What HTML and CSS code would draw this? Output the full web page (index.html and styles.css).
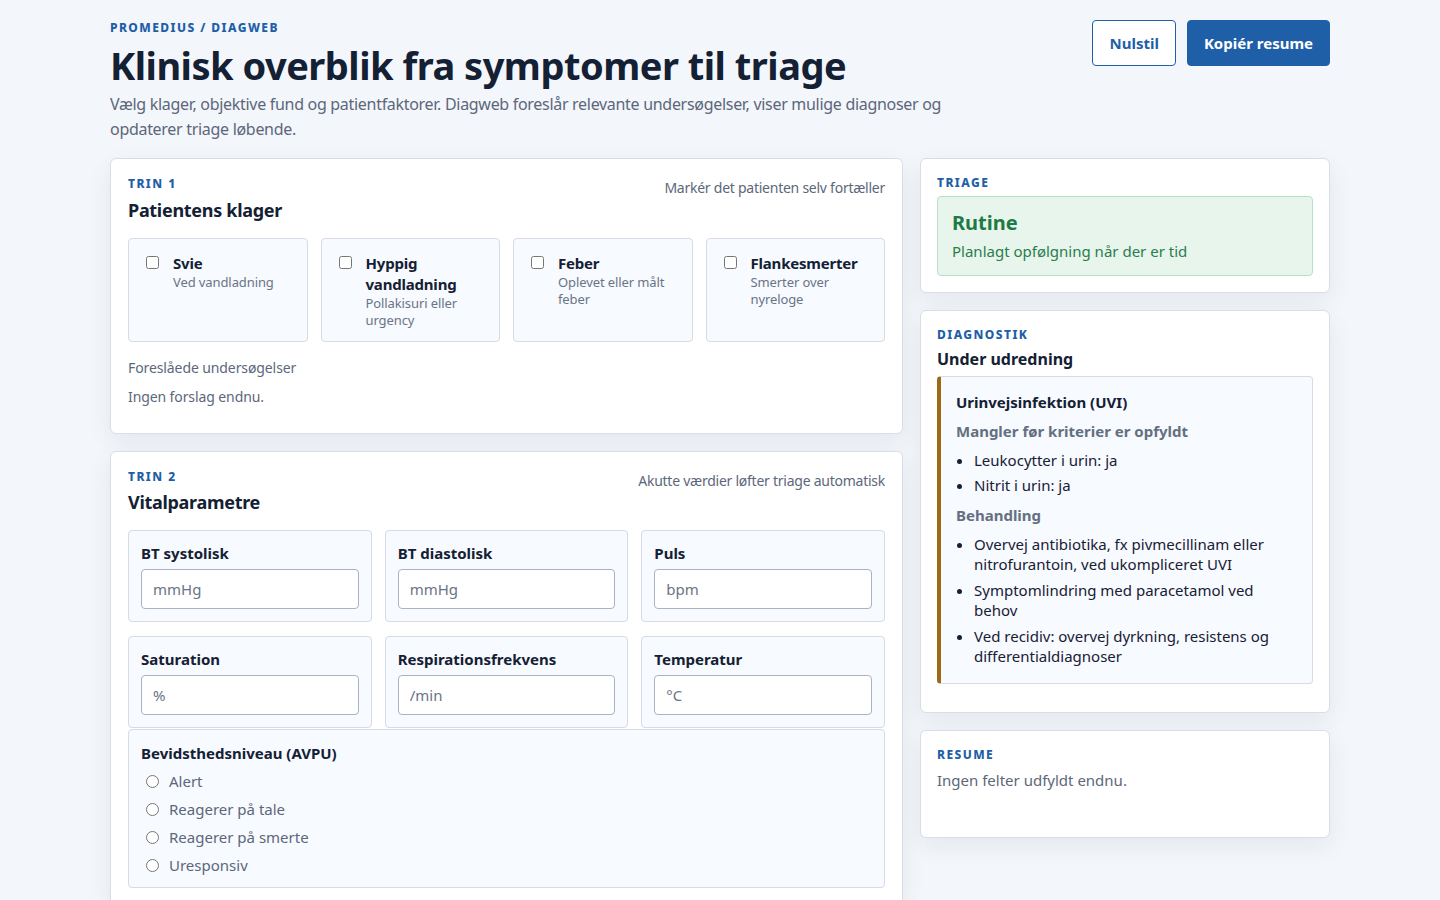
FILE: index.html
```html
<!DOCTYPE html>
<html lang="da">
<head>
<meta charset="utf-8">
<title>Diagweb</title>
<link rel="stylesheet" href="styles.css">
</head>
<body>
<div class="page">
  <header class="top">
    <div class="intro">
      <div class="eyebrow">Promedius / Diagweb</div>
      <h1>Klinisk overblik fra symptomer til triage</h1>
      <p class="lead">Vælg klager, objektive fund og patientfaktorer. Diagweb foreslår relevante undersøgelser, viser mulige diagnoser og opdaterer triage løbende.</p>
    </div>
    <div class="actions">
      <button class="btn btn-outline">Nulstil</button>
      <button class="btn btn-primary">Kopiér resume</button>
    </div>
  </header>

  <main class="layout">
    <div class="col-main">
      <section class="card card-main">
        <div class="card-head">
          <div>
            <div class="eyebrow">Trin 1</div>
            <h2>Patientens klager</h2>
          </div>
          <div class="hint">Markér det patienten selv fortæller</div>
        </div>
        <div class="complaints">
          <label class="complaint"><input type="checkbox"><span class="ctext"><span class="ctitle">Svie</span><span class="cdesc">Ved vandladning</span></span></label>
          <label class="complaint"><input type="checkbox"><span class="ctext"><span class="ctitle">Hyppig vandladning</span><span class="cdesc">Pollakisuri eller urgency</span></span></label>
          <label class="complaint"><input type="checkbox"><span class="ctext"><span class="ctitle">Feber</span><span class="cdesc">Oplevet eller målt feber</span></span></label>
          <label class="complaint"><input type="checkbox"><span class="ctext"><span class="ctitle">Flankesmerter</span><span class="cdesc">Smerter over nyreloge</span></span></label>
        </div>
        <div class="suggest">
          <div class="muted">Foreslåede undersøgelser</div>
          <div class="muted">Ingen forslag endnu.</div>
        </div>
      </section>

      <section class="card card-main">
        <div class="card-head">
          <div>
            <div class="eyebrow">Trin 2</div>
            <h2 class="h2-tight">Vitalparametre</h2>
          </div>
          <div class="hint">Akutte værdier løfter triage automatisk</div>
        </div>
        <div class="vitals">
          <label class="vital"><span class="vlabel">BT systolisk</span><input type="text" placeholder="mmHg"></label>
          <label class="vital"><span class="vlabel">BT diastolisk</span><input type="text" placeholder="mmHg"></label>
          <label class="vital"><span class="vlabel">Puls</span><input type="text" placeholder="bpm"></label>
          <label class="vital"><span class="vlabel">Saturation</span><input type="text" placeholder="%"></label>
          <label class="vital"><span class="vlabel">Respirationsfrekvens</span><input type="text" placeholder="/min"></label>
          <label class="vital"><span class="vlabel">Temperatur</span><input type="text" placeholder="°C"></label>
        </div>
        <div class="avpu">
          <div class="vlabel">Bevidsthedsniveau (AVPU)</div>
          <label class="radio"><input type="radio" name="avpu"> Alert</label>
          <label class="radio"><input type="radio" name="avpu"> Reagerer på tale</label>
          <label class="radio"><input type="radio" name="avpu"> Reagerer på smerte</label>
          <label class="radio"><input type="radio" name="avpu"> Uresponsiv</label>
        </div>
      </section>
    </div>

    <aside class="col-side">
      <section class="card">
        <div class="eyebrow">Triage</div>
        <div class="triage">
          <div class="triage-title">Rutine</div>
          <div class="triage-text">Planlagt opfølgning når der er tid</div>
        </div>
      </section>

      <section class="card">
        <div class="eyebrow">Diagnostik</div>
        <h3>Under udredning</h3>
        <div class="diag">
          <div class="diag-title">Urinvejsinfektion (UVI)</div>
          <div class="diag-sub">Mangler før kriterier er opfyldt</div>
          <ul class="list-tight">
            <li>Leukocytter i urin: ja</li>
            <li>Nitrit i urin: ja</li>
          </ul>
          <div class="diag-sub">Behandling</div>
          <ul>
            <li>Overvej antibiotika, fx pivmecillinam eller nitrofurantoin, ved ukompliceret UVI</li>
            <li>Symptomlindring med paracetamol ved behov</li>
            <li>Ved recidiv: overvej dyrkning, resistens og differentialdiagnoser</li>
          </ul>
        </div>
      </section>

      <section class="card resume">
        <div class="eyebrow">Resume</div>
        <div class="resume-text">Ingen felter udfyldt endnu.</div>
      </section>
    </aside>
  </main>
</div>
</body>
</html>
```

FILE: styles.css
```css
* { box-sizing: border-box; }
html, body { margin: 0; padding: 0; }
body {
  background: #f3f6fa;
  font-family: "Noto Sans", "Open Sans", sans-serif;
  color: #172033;
  font-size: 16px;
}
.page {
  width: 1220px;
  margin: 0 auto;
  padding-top: 20px;
}
.top {
  display: flex;
  justify-content: space-between;
  align-items: flex-start;
}
.intro { max-width: 850px; }
.eyebrow {
  color: #1f5fa8;
  font-weight: 800;
  text-transform: uppercase;
  letter-spacing: 0.12em;
  font-size: 12px;
  line-height: 16px;
}
h1 {
  margin: 4px 0 0;
  font-size: 38px;
  line-height: 50px;
  font-weight: 700;
  letter-spacing: -0.5px;
  color: #142033;
}
.lead {
  margin: 2px 0 0;
  color: #5c677a;
  font-size: 16px;
  line-height: 25px;
  letter-spacing: -0.3px;
}
.actions { display: flex; gap: 11px; }
.btn {
  font-family: inherit;
  font-size: 15px;
  font-weight: 700;
  height: 46px;
  padding: 0 16px;
  border-radius: 4px;
  cursor: pointer;
}
.btn-outline { background: #fff; color: #1f5fa8; border: 1px solid #1f5fa8; }
.btn-primary { background: #1f5fa8; color: #fff; border: 1px solid #1f5fa8; }

.layout {
  display: grid;
  grid-template-columns: minmax(0, 1fr) 410px;
  gap: 17px;
  margin-top: 16px;
  align-items: start;
}
.col-main, .col-side { display: flex; flex-direction: column; gap: 17px; min-width: 0; }
.card {
  background: #fff;
  border: 1px solid #d8dee8;
  border-radius: 6px;
  padding: 16px;
  box-shadow: 0 8px 24px rgba(30, 45, 70, 0.07);
}
.card-main { padding: 17px; }
.card-head { display: flex; justify-content: space-between; align-items: flex-start; }
.hint { color: #5c677a; font-size: 14px; line-height: 20px; margin-top: 2px; letter-spacing: -0.25px; }
h2 { margin: 6px 0 0; font-size: 18px; line-height: 24px; font-weight: 700; letter-spacing: -0.3px; color: #142033; }
.h2-tight { margin-top: 5px; }
h3 { margin: 5px 0 0; font-size: 16px; line-height: 22px; font-weight: 700; color: #142033; }

.complaints {
  display: grid;
  grid-template-columns: repeat(4, minmax(0, 1fr));
  gap: 13px;
  margin-top: 16px;
}
.complaint {
  display: flex;
  gap: 14px;
  background: #f7faff;
  border: 1px solid #d5dce6;
  border-radius: 4px;
  padding: 14px 12px 12px 17px;
}
.complaint input { margin: 3px 0 0; width: 13px; height: 13px; flex: none; }
.ctext { display: flex; flex-direction: column; min-width: 0; }
.ctitle { font-weight: 700; font-size: 15px; line-height: 21px; color: #142033; letter-spacing: -0.2px; }
.cdesc { color: #6a7485; font-size: 13px; line-height: 17px; letter-spacing: -0.1px; }

.suggest { margin-top: 16px; display: flex; flex-direction: column; gap: 9px; padding-bottom: 9px; }
.muted { color: #5c677a; font-size: 14px; line-height: 20px; letter-spacing: -0.1px; }

.vitals {
  display: grid;
  grid-template-columns: repeat(3, minmax(0, 1fr));
  column-gap: 13px;
  row-gap: 14px;
  margin-top: 16px;
}
.vital {
  display: flex;
  flex-direction: column;
  gap: 5px;
  background: #f7faff;
  border: 1px solid #d5dce6;
  border-radius: 4px;
  padding: 11px 12px 12px;
  min-width: 0;
}
.vlabel { font-weight: 700; font-size: 15px; line-height: 22px; color: #142033; }
.vital input {
  font-family: inherit;
  font-size: 15px;
  width: 100%;
  min-width: 0;
  height: 40px;
  border: 1px solid #a9b3c2;
  border-radius: 4px;
  padding: 0 11px;
  background: #fff;
  color: #142033;
}
.vital input::placeholder { color: #6a7485; }
.avpu {
  margin-top: 1px;
  background: #f7faff;
  border: 1px solid #d5dce6;
  border-radius: 4px;
  padding: 12px 12px 8px;
}
.avpu .vlabel { margin-bottom: 3px; }
.radio {
  display: flex;
  align-items: center;
  gap: 10px;
  color: #5c677a;
  font-size: 15px;
  line-height: 28px;
  padding-left: 5px;
}
.radio input { margin: 0; width: 13px; height: 13px; }

.triage {
  margin-top: 5px;
  background: #e7f5ec;
  border: 1px solid #b9dfc6;
  border-radius: 4px;
  padding: 12px 14px 13px;
}
.triage-title { color: #1d7a45; font-weight: 700; font-size: 20px; line-height: 28px; }
.triage-text { color: #2a7d4d; font-size: 15px; line-height: 22px; margin-top: 3px; }

.diag {
  margin-top: 6px;
  margin-bottom: 12px;
  background: #f7faff;
  border: 1px solid #d5dce6;
  border-left: 4px solid #9c6a17;
  border-radius: 4px;
  padding: 14px 14px 17px 15px;
}
.diag-title { font-weight: 700; font-size: 15px; line-height: 22px; color: #142033; }
.diag-sub { font-weight: 700; font-size: 15px; line-height: 22px; color: #64707f; margin-top: 7px; }
.diag ul { margin: 8px 0 0; padding-left: 18px; }
.diag li { font-size: 15px; line-height: 20px; color: #172033; margin-bottom: 6px; }
.diag .list-tight li { margin-bottom: 5px; }
.diag li:last-child { margin-bottom: 0; }
.diag-sub + ul { margin-top: 8px; }
ul + .diag-sub { margin-top: 9px; }

.resume { min-height: 108px; }
.resume-text { color: #5c677a; font-size: 15px; line-height: 20px; margin-top: 7px; }
```
